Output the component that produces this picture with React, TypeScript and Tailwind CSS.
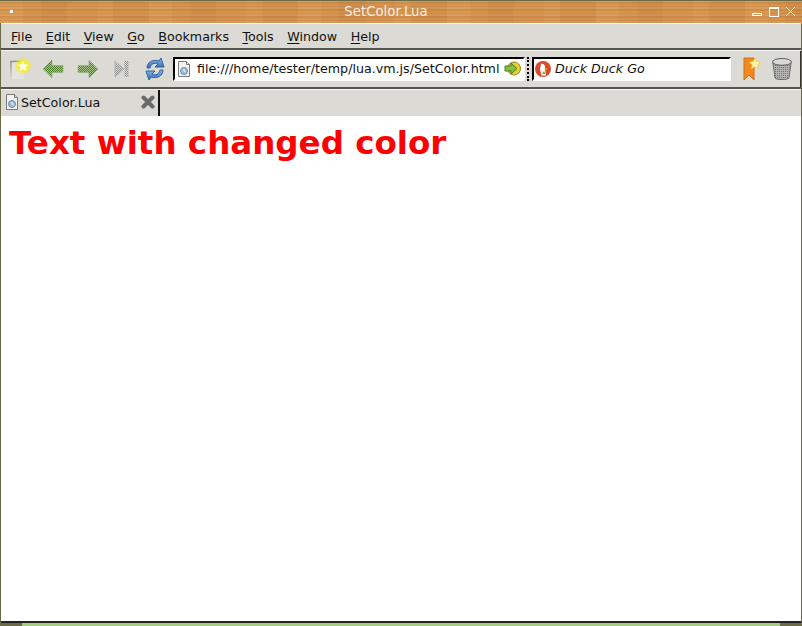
const menus: [string, string][] = [
  ["F", "ile"],
  ["E", "dit"],
  ["V", "iew"],
  ["G", "o"],
  ["B", "ookmarks"],
  ["T", "ools"],
  ["W", "indow"],
  ["H", "elp"],
];

const PageIcon = () => (
  <svg width="14" height="16" viewBox="0 0 14 16">
    <path d="M1.500.5h8l3 3v12h-11z" fill="#f1f1ef" stroke="#77797c" />
    <path d="M9.500.5v3h3" fill="#d4d4d2" stroke="#77797c" />
    <circle cx="7" cy="10" r="3.500" fill="#a9bdd6" stroke="#6b8bb0" />
    <path d="M7 8v2l1.500 1" fill="none" stroke="#f5f7fa" />
  </svg>
);

const Sep = () => <div className="h-[3px] shrink-0 bg-[linear-gradient(#55554f_0_2px,#f4f4f1_2px)]" />;

// checkered fill shared by the toolbar arrows
const Dither = ({ id, color, base }: { id: string; color: string; base: string }) => (
  <pattern id={id} width="2" height="2" patternUnits="userSpaceOnUse">
    <rect width="2" height="2" fill={base} />
    <rect width="1" height="1" fill={color} />
    <rect x="1" y="1" width="1" height="1" fill={color} />
  </pattern>
);

export default function App() {
  return (
    <div className="relative flex h-[626px] w-[802px] flex-col overflow-hidden bg-white font-['DejaVu_Sans',sans-serif] text-black">
      {/* title bar */}
      <div className="relative flex h-[23px] shrink-0 items-center justify-center border-t border-[#6a6a48] bg-[#d4914c] bg-[repeating-linear-gradient(0deg,rgba(255,225,170,0.09)_0_2px,rgba(130,70,20,0.07)_2px_3px,rgba(255,225,170,0.03)_3px_5px,rgba(130,70,20,0.10)_5px_7px),repeating-linear-gradient(90deg,rgba(255,220,160,0.08)_0_23px,transparent_23px_41px,rgba(120,70,20,0.07)_41px_67px,transparent_67px_97px,rgba(255,220,160,0.05)_97px_113px,rgba(120,70,20,0.04)_113px_149px)] pr-[30px] text-[13.300px] text-[#f4efe6]">
        <div className="absolute left-[10px] top-[9px] size-[3px] bg-white" />
        <span>SetColor.Lua</span>
        <div className="absolute left-[752px] top-[12px] h-[3px] w-[10px] border border-white" />
        <div className="absolute left-[769px] top-[6px] h-[10px] w-[10px] border border-t-2 border-white" />
        <svg className="absolute left-[785px] top-[5px]" width="11" height="11" viewBox="0 0 11 11">
          <path d="M1 1l9 9M10 1l-9 9" stroke="#fff" />
        </svg>
      </div>

      {/* window frame */}
      <div className="flex min-h-0 flex-1 flex-col border-x border-[#6a6a48] bg-[#dbdad5]">
        <nav className="flex h-[25px] shrink-0 items-center gap-[13.500px] border-t border-white pl-[10px] pt-[1px] text-[12.670px] text-[#111]">
          {menus.map(([key, rest]) => (
            <span key={key}>
              <span className="underline underline-offset-2">{key}</span>
              {rest}
            </span>
          ))}
        </nav>
        <Sep />

        {/* toolbar */}
        <div className="flex h-[36px] shrink-0 items-center border-r border-[#333] pb-[1px]">
          <svg className="ml-[8px]" width="24" height="24" viewBox="0 0 24 24">
            <defs>
              <radialGradient id="glow">
                <stop offset="0.500" stopColor="#f6f020" />
                <stop offset="1" stopColor="#f6f020" stopOpacity="0" />
              </radialGradient>
              <linearGradient id="fade" x1="0" y1="0" x2="0" y2="1">
                <stop offset="0" stopColor="#8c8c88" />
                <stop offset="1" stopColor="#dbdad5" />
              </linearGradient>
            </defs>
            <path d="M2 22V4.500h12" fill="none" stroke="url(#fade)" strokeWidth="1.500" />
            <path d="M3 22V5.500h12V22z" fill="#e9e9e5" opacity="0.6" />
            <circle cx="14" cy="9" r="9" fill="url(#glow)" />
            <path d="M14 4l1.600 3.300 3.600.5-2.600 2.500.6 3.600-3.200-1.700-3.200 1.700.6-3.600-2.600-2.500 3.600-.5z" fill="#fffdf0" />
          </svg>
          <svg className="ml-[9px]" width="22" height="22" viewBox="0 0 22 22">
            <defs>
              <Dither id="green" color="#4f7f2a" base="#a8c68c" />
              <Dither id="gray" color="#8d8d8a" base="#dbdad5" />
            </defs>
            <path d="M1 11L10 2v5.500h11v7H10V20z" fill="url(#green)" stroke="#93b07a" strokeWidth="0.700" />
          </svg>
          <svg className="ml-[13px]" width="22" height="22" viewBox="0 0 22 22">
            <path d="M21 11L12 2v5.500H1v7h11V20z" fill="url(#green)" stroke="#93b07a" strokeWidth="0.700" />
          </svg>
          <svg className="ml-[15px]" width="16" height="18" viewBox="0 0 16 18">
            <path d="M1 1l9 8-9 8z" fill="url(#gray)" stroke="#b5b5b1" />
            <path d="M12.500 1v16" stroke="url(#gray)" strokeWidth="4" />
          </svg>
          <svg className="ml-[14px]" width="22" height="24" viewBox="0 0 22 24">
            <defs>
              <linearGradient id="blue" x1="0" y1="0" x2="0" y2="1">
                <stop offset="0" stopColor="#8fb8e4" />
                <stop offset="1" stopColor="#2f6db5" />
              </linearGradient>
            </defs>
            <path d="M3 11C3 5 9 2 15 4l2-3 3 9-9 0 3-3C10 5 7 7 6 11z" fill="url(#blue)" stroke="#2f5f9e" />
            <path d="M19 13c0 6-6 9-12 7l-2 3-3-9 9 0-3 3c4 2 7 0 8-4z" fill="url(#blue)" stroke="#2f5f9e" />
          </svg>

          {/* address box */}
          <div className="ml-[7px] flex h-[24px] w-[352px] shrink-0 items-center border-2 border-b-white border-l-black border-r-white border-t-black bg-white pl-[2px] text-[12.670px] text-[#111]">
            <PageIcon />
            <span className="ml-[6px]">file:///home/tester/temp/lua.vm.js/SetColor.html</span>
            <svg className="ml-[5px]" width="17" height="15" viewBox="0 0 17 15">
              <circle cx="10" cy="7.500" r="6.500" fill="#e8cf2c" stroke="#8f8a1d" />
              <path d="M1 5h6V2l6 5.500L7 13v-3H1z" fill="#86c03f" stroke="#4f7a22" />
            </svg>
          </div>
          <div className="ml-[2px] h-[24px] w-[2px] border-l-2 border-dotted border-black" />

          {/* search box */}
          <div className="ml-[3px] flex h-[24px] w-[199px] shrink-0 items-center border-2 border-b-white border-l-black border-r-white border-t-black bg-white pl-[1px] text-[12.670px] italic text-[#111]">
            <svg width="16" height="16" viewBox="0 0 16 16">
              <circle cx="8" cy="8" r="8" fill="#d9492c" />
              <path d="M6 3c3-1 4.500 1.500 4 5l1 6.500H6.500L5 8z" fill="#fff" />
              <path d="M8.500 8l3.500-1v2z" fill="#e8a91c" />
              <path d="M7 13l2-3 1.500 3z" fill="#6cae3a" />
            </svg>
            <span className="ml-[4px]">Duck Duck Go</span>
          </div>

          <svg className="ml-[12px]" width="18" height="24" viewBox="0 0 18 24">
            <path d="M1 1h10v22l-5-5-5 5z" fill="#f08a1d" stroke="#d46f10" />
            <path d="M12 1l1.900 3.600 3.600.6-2.700 2.600.6 3.700L12 9.800l-3.400 1.700.6-3.700-2.700-2.600 3.600-.6z" fill="#fff3a8" stroke="#edc93a" strokeWidth="0.700" />
          </svg>
          <svg className="ml-[10px]" width="22" height="24" viewBox="0 0 22 24">
            <defs>
              <pattern id="mesh" width="2" height="2" patternUnits="userSpaceOnUse">
                <rect width="2" height="2" fill="#b5b5b3" />
                <rect width="1" height="1" fill="#6e6e6c" />
              </pattern>
            </defs>
            <ellipse cx="11" cy="5" rx="9.500" ry="3.500" fill="#d8d8d4" stroke="#5c5c5a" />
            <path d="M2 6l2 15c1 2 13 2 14 0l2-15c-3 3-15 3-18 0z" fill="url(#mesh)" stroke="#6a6a68" />
          </svg>
        </div>
        <Sep />

        {/* tab strip */}
        <div className="flex h-[28px] shrink-0 items-stretch border-b-2 border-white">
          <div className="flex w-[159px] items-center border-r-2 border-[#111] pb-[2px] pl-[4px] text-[12.670px] text-[#111]">
            <PageIcon />
            <span className="ml-[2px]">SetColor.Lua</span>
            <svg className="ml-[41px]" width="14" height="14" viewBox="0 0 14 14">
              <path d="M2.500 2.500l9 9M11.500 2.500l-9 9" stroke="#6b6b68" strokeWidth="4" strokeLinecap="round" />
            </svg>
          </div>
        </div>

        {/* page */}
        <main className="min-h-0 flex-1 bg-white pl-[8px] pt-[2px]">
          <h1 className="text-[32.500px] font-bold leading-[46px] text-[#ff0000]">Text with changed color</h1>
        </main>
        <div className="h-[2px] shrink-0 bg-[#222]" />
      </div>

      {/* desktop behind the window */}
      <div className="flex h-[3px] shrink-0">
        <div className="w-[22px] bg-[#6a6a48]" />
        <div className="w-[758px] bg-[#a5cc7c]" />
        <div className="flex-1 bg-[#6a6a48]" />
      </div>
    </div>
  );
}
